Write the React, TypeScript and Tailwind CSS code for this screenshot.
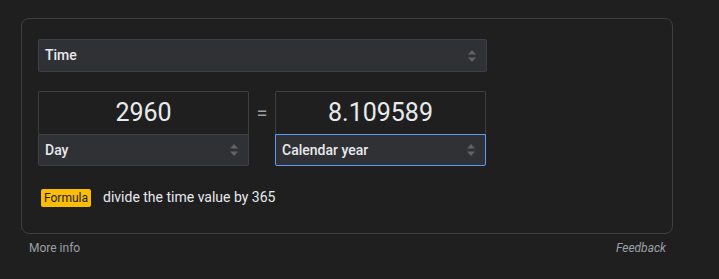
import { ReactNode } from "react";

function Arrows() {
  return (
    <svg width="10" height="14" viewBox="0 0 10 14" className="shrink-0">
      <path d="M5 1 L9 5.5 L1 5.5 Z" fill="#5f6368" />
      <path d="M5 13 L9 8.5 L1 8.5 Z" fill="#5f6368" />
    </svg>
  );
}

function SelectBar({ label, active, className }: { label: string; active?: boolean; className?: string }) {
  return (
    <div
      className={`flex items-center justify-between bg-[#303134] pl-[6px] pr-[9px] text-[14px] font-medium text-[#e8eaed] ${
        active ? "border border-[#5b9af5]" : "border border-[#3c4043]"
      } ${className ?? ""}`}
    >
      <span>{label}</span>
      <Arrows />
    </div>
  );
}

function UnitBox({ value, unit, active }: { value: string; unit: string; active?: boolean }) {
  return (
    <div className="flex w-[211px] flex-col">
      <div className="flex h-[43px] items-center justify-center rounded-t-[2px] border border-b-0 border-[#3c4043] text-[25px] text-[#e8eaed]">
        {value}
      </div>
      <SelectBar label={unit} active={active} className="h-[32px] rounded-b-[2px]" />
    </div>
  );
}

function Badge({ children }: { children: ReactNode }) {
  return (
    <span className="inline-flex h-[18px] items-center rounded-[2px] bg-[#fbbc04] px-[3px] text-[12px] text-[#202124]">
      {children}
    </span>
  );
}

export default function App() {
  return (
    <div
      className="h-[279px] w-[719px] bg-[#1f1f1f] pt-[18px] pl-[21px]"
      style={{ fontFamily: "Roboto, Arial, sans-serif" }}
    >
      <div className="flex h-[216px] w-[652px] flex-col rounded-[8px] border border-[#3c4043] pl-[16px] pt-[20px]">
        <SelectBar label="Time" className="h-[33px] w-[449px] rounded-[2px]" />
        <div className="mt-[19px] flex items-start">
          <UnitBox value="2960" unit="Day" />
          <div className="flex h-[43px] w-[26px] items-center justify-center text-[20px] text-[#9aa0a6]">=</div>
          <UnitBox value="8.109589" unit="Calendar year" active />
        </div>
        <div className="mt-[21px] flex items-center gap-[12px] pl-[3px]">
          <Badge>Formula</Badge>
          <span className="text-[14px] text-[#e8eaed]">divide the time value by 365</span>
        </div>
      </div>
      <div className="mt-[5px] flex w-[645px] justify-between pl-[8px] text-[12px] text-[#9aa0a6]">
        <span>More info</span>
        <span className="italic">Feedback</span>
      </div>
    </div>
  );
}
